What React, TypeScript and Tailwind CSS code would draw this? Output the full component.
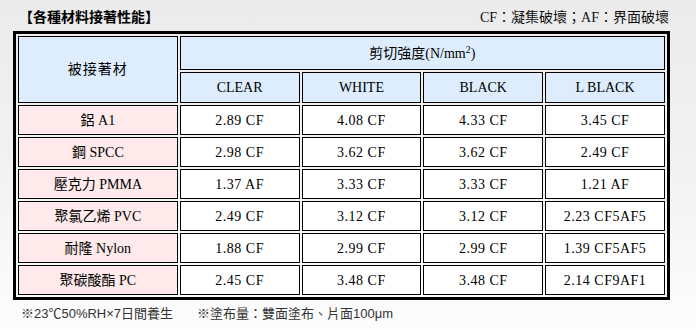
const ROWS = [
  { name: "鋁 A1", vals: ["2.89 CF", "4.08 CF", "4.33 CF", "3.45 CF"] },
  { name: "鋼 SPCC", vals: ["2.98 CF", "3.62 CF", "3.62 CF", "2.49 CF"] },
  { name: "壓克力 PMMA", vals: ["1.37 AF", "3.33 CF", "3.33 CF", "1.21 AF"] },
  { name: "聚氯乙烯 PVC", vals: ["2.49 CF", "3.12 CF", "3.12 CF", "2.23 CF5AF5"] },
  { name: "耐隆 Nylon", vals: ["1.88 CF", "2.99 CF", "2.99 CF", "1.39 CF5AF5"] },
  { name: "聚碳酸酯 PC", vals: ["2.45 CF", "3.48 CF", "3.48 CF", "2.14 CF9AF1"] },
];

const COLS = ["CLEAR", "WHITE", "BLACK", "L BLACK"];

const serif = "font-['Liberation_Serif','Noto_Sans_CJK_TC',serif]";

export default function App() {
  return (
    <div className="w-[696px] h-[330px] bg-linear-to-b from-[#ebebeb] via-[#f2f2f2] to-[#fdfdfd] px-[13px] pt-[8px] text-black">
      {/* title row */}
      <div className={`flex items-center justify-between h-[20px] w-[657px] ${serif}`}>
        <span className="ml-[6px] text-[14px] font-bold leading-none">【各種材料接著性能】</span>
        <span className="mr-[1px] text-[14px] leading-none text-[#111]">CF：凝集破壞；AF：界面破壞</span>
      </div>

      {/* table */}
      <table
        className={`mt-[3px] w-[657px] border-separate border-spacing-[2px] border-[3px] border-black text-[14px] ${serif}`}
      >
        <tbody>
          <tr>
            <td
              rowSpan={2}
              className="w-[160px] border border-black bg-[#ddedfd] text-center align-middle tracking-[1px]"
            >
              被接著材
            </td>
            <td colSpan={4} className="h-[34px] border border-black bg-[#ddedfd] text-center align-middle">
              剪切強度(N/mm<sup className="text-[10px]">2</sup>)
            </td>
          </tr>
          <tr>
            {COLS.map((c) => (
              <td key={c} className="h-[31px] w-[120px] border border-black bg-[#ddedfd] text-center align-middle">
                {c}
              </td>
            ))}
          </tr>
          {ROWS.map((r) => (
            <tr key={r.name}>
              <td className="h-[30px] border border-black bg-[#feeaea] text-center align-middle">{r.name}</td>
              {r.vals.map((v, i) => (
                <td key={i} className="h-[30px] border border-black bg-white text-center align-middle tracking-[0.5px]">
                  {v}
                </td>
              ))}
            </tr>
          ))}
        </tbody>
      </table>

      {/* notes */}
      <div className="mt-[4px] flex gap-[24px] pl-[8px] text-[13px] leading-[19px] text-[#333] font-['Liberation_Sans','Noto_Sans_CJK_TC',sans-serif]">
        <span>※23℃50%RH×7日間養生</span>
        <span>※塗布量：雙面塗布、片面100μm</span>
      </div>
    </div>
  );
}
